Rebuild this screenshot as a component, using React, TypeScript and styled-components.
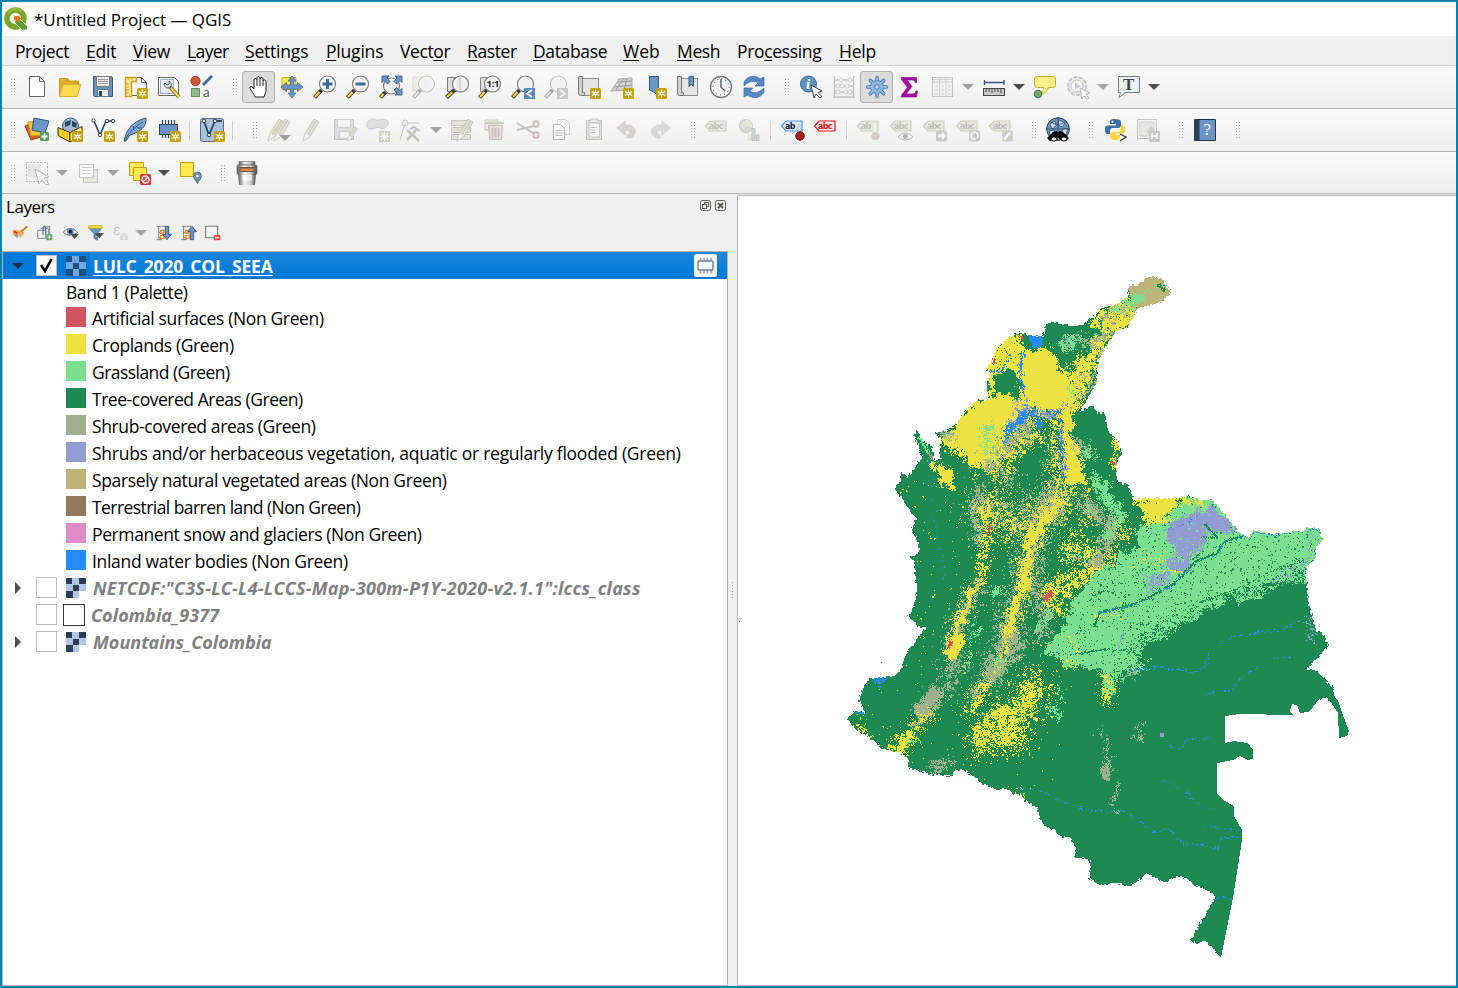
import React from "react";
import styled, { createGlobalStyle } from "styled-components";

const Global = createGlobalStyle`
  * { box-sizing: border-box; }
  html, body { margin: 0; padding: 0; background: #fff; }
  body { font-family: "Open Sans", "Noto Sans", sans-serif; color: #000; }
`;

/* ---------- window ---------- */
const Window = styled.div`
  width: 1458px; height: 988px; display: flex; flex-direction: column;
  border: 2px solid #0082b3; background: #f0f0f0; overflow: hidden;
`;
const TitleBar = styled.header`
  height: 34px; flex: none; background: #fff; display: flex; align-items: center;
  padding-left: 2px; gap: 6px;
`;
const Title = styled.span`
  font-size: 17px; letter-spacing: -0.04px; white-space: pre; line-height: 24px; padding-top: 1px;
`;
const MenuBar = styled.nav`
  height: 30px; flex: none; display: flex; align-items: center; padding-left: 13px;
  border-bottom: 1px solid #cfcfcf;
`;
const MenuItem = styled.span<{ $w: number; $ls?: number }>`
  flex: none; width: ${(p) => p.$w}px; font-size: 17.5px; letter-spacing: ${(p) => p.$ls ?? -0.2}px; line-height: 24px;
  white-space: nowrap;
  u { text-underline-offset: 2px; text-decoration-thickness: 1px; }
`;
const Toolbar = styled.div<{ $h: number }>`
  height: ${(p) => p.$h}px; flex: none; display: flex; align-items: center;
  background: linear-gradient(#fafafa, #efefef); border-bottom: 1px solid #b4b4b4;
`;
const Grip = styled.span<{ $first?: boolean }>`
  flex: none; width: ${(p) => (p.$first ? 18.4 : 24)}px; height: 18px; display: flex;
  padding-left: ${(p) => (p.$first ? 8 : 13.6)}px;
  &::before {
    content: ""; width: 5px; height: 18px;
    background: radial-gradient(circle, #a9a9a9 0.8px, transparent 0.9px) 0 0 / 3px 3px;
  }
`;
const Button = styled.span<{ $on?: boolean }>`
  flex: none; width: 33px; height: 32px; display: flex; align-items: center; justify-content: center;
  border: 1px solid ${(p) => (p.$on ? "#adadad" : "transparent")}; border-radius: 3px;
  background: ${(p) => (p.$on ? "#dcdcdc" : "transparent")};
`;
const Arrow = styled.span<{ $dim?: boolean; $w?: number }>`
  flex: none; width: ${(p) => p.$w ?? 18}px; display: flex; justify-content: center;
  &::before {
    content: ""; border: 6px solid transparent; border-bottom: 0;
    border-top-color: ${(p) => (p.$dim ? "#a3a3a3" : "#4d4d4d")};
  }
`;
const Separator = styled.span`
  flex: none; width: 10px; height: 19px; display: flex; justify-content: center;
  &::before { content: ""; width: 2px; background: linear-gradient(90deg, #d0d0d0 50%, #fff 50%); }
`;

/* ---------- icon fragments ---------- */
const Svg = styled.svg<{ $faded?: boolean }>`
  flex: none; display: block; overflow: visible; opacity: ${(p) => (p.$faded ? 0.4 : 1)};
  filter: ${(p) => (p.$faded ? "grayscale(.4)" : "none")};
`;
const Star = ({ x = 13, y = 13 }: { x?: number; y?: number }) => (
  <g transform={`translate(${x} ${y})`}>
    <rect width="11" height="11" rx="1.5" fill="#c5a20a" />
    <path d="M5.5 1.4v8.2M1.9 3.4l7.2 4.2M1.9 7.6l7.2-4.2" stroke="#fff" strokeWidth="1.2" />
    <circle cx="5.5" cy="5.5" r="1.9" fill="#fff" />
    <circle cx="5.5" cy="5.5" r=".8" fill="#c5a20a" />
  </g>
);
const Lens = ({ x = 14.5, y = 9, dim }: { x?: number; y?: number; dim?: boolean }) => (
  <g>
    <path d={`M1.5 22.5L${x - 6} ${y + 6}`} stroke="#333" strokeWidth="4" />
    <path d={`M2 22L${x - 8} ${y + 8}`} stroke={dim ? "#ccc" : "#fdd33c"} strokeWidth="2.3" />
    <circle cx={x} cy={y} r="8" fill="#eee" fillOpacity=".94" stroke="#777" strokeWidth="1.2" />
    <circle cx={x} cy={y} r="6.6" fill="none" stroke="#fff" strokeWidth=".8" />
  </g>
);
const Pencil = ({ x = 0, y = 0, s = 1 }: { x?: number; y?: number; s?: number }) => (
  <g transform={`translate(${x} ${y}) scale(${s})`}>
    <path d="M2 23l2.500-8.500L13 1l5 3-8.500 14z" fill="#c9bd8c" stroke="#8b7e55" />
    <path d="M2 23l2.500-8.500 5 3.500z" fill="#fff" stroke="#8b7e55" strokeWidth=".7" />
    <path d="M7 16l8.500-13.500" stroke="#8b7e55" />
  </g>
);
const Tag = ({ color = "#9b9563", fill = "#d9d5b4", ink = "#666", text = "abc" }: { color?: string; fill?: string; ink?: string; text?: string }) => (
  <g>
    <path d="M.5 8L5 3h16v10H5z" fill={fill} stroke={color} strokeWidth="1.2" />
    <text x="4" y="11" fontFamily="DejaVu Sans" fontWeight="700" fontSize="8" fill={ink} textLength={text === "abc" ? 14.5 : 10.5}>{text}</text>
  </g>
);
const Sheet = ({ fill = "#e5e5e5" }: { fill?: string }) => (
  <g>
    <path d="M5.500 3.500H21.500V20.500H5.500z" fill={fill} stroke="#8d8d8d" />
    <path d="M1.500 1.500h4v16h2v3H3.500c-2 0-2-2-2-4z" fill="#d0d0d0" stroke="#777" />
  </g>
);
const Blue = "#6a95c7";
const Dark = "#2d4560";

const icons: Record<string, React.ReactNode> = {
  doc: <path d="M4.500 1.500h10l5 5v15h-15zM14.500 1.500v5h5" fill="#fff" stroke="#666" />,
  open: <><path d="M1.500 21V3.500h8l2 2.500h9v4" fill="#dcae2c" stroke="#c49a21" /><path d="M1.500 21.500L5 9.500h18l-4 12z" fill="#fcd94f" stroke="#dbb02f" /></>,
  save: <><path d="M2.500 1.500h18l1 1v19h-18l-1-1z" fill="#6d91bd" stroke="#3c5a7c" /><path d="M5.500 1.500h13v10h-13z" fill="#eee" stroke="#777" /><path d="M7 4.500h10M7 6.500h10M7 8.500h10" stroke="#999" /><path d="M6.500 14.500h11v7h-11z" fill="#eee" stroke="#5b7799" /><path d="M8 16h3v5H8z" fill={Dark} /></>,
  layout: <><path d="M4.500 2.500h13l5 5v13h-18z" fill="#f6f6f6" stroke="#666" /><path d="M17.500 2.500v5h5" fill="none" stroke="#666" /><path d="M1.500 2.500h11v4h-5v15h-6z" fill="#fbe59b" stroke="#c89e16" strokeWidth="1.400" /><path d="M5 3v2M8 3v2M2 9h3M2 12h3M2 15h3M2 18h3" stroke="#c89e16" /><Star /></>,
  manager: <><path d="M1.500 2.500h16l4 4v14h-20z" fill="#fff" stroke="#666" /><path d="M3.500 4.500h13v14h-13z" fill="#e8edf8" stroke="#9aaed0" /><path d="M13 12l9 10" stroke="#8b6c1d" strokeWidth="4" /><path d="M14 13l8 9" stroke="#f0ce55" strokeWidth="2.4" /><path d="M7 9c1 4 4 5 6 3s2-4-1-6l0 3-2 1-2-2z" fill="#ddd" stroke="#555" /></>,
  style: <><circle cx="5.500" cy="6" r="4.600" fill="#cf5a33" stroke="#a23c1b" /><path d="M13 10l9-9" stroke="#456f9f" strokeWidth="3" /><rect x="1.500" y="13.500" width="8" height="8" fill="#8ebb92" stroke="#5d9263" /><text x="13" y="22" fontSize="12" fill="#444">a</text></>,
  hand: <path d="M8 22c-1-4-6-8-5-10 1-1 3 0 4 2V5c0-2 2.500-2 3 0V3c0-2 3-2 3 0v1c0-2 3-2 3 0v2c1-2 3-1 3 1v9l-2 6z M10 5v6M13 4v7M16 6v5" fill="#fff" stroke="#222" />,
  pan: <><path d="M2 2.500h14v12H2z" fill="#ffe750" stroke="#cda91c" /><path d="M12 1l4 5h-2.500v4h4V7.500L23 12l-5.500 4.500V14h-4v4H16l-4 5-4-5h2.500v-4h-4v2.500L1 12l5.500-4.500V10h4V6H8z" fill={Blue} stroke="#41678f" strokeWidth=".8" /></>,
  zin: <><Lens /><path d="M14.500 4v10M9.500 9h10" stroke="#3e6a9e" strokeWidth="3" /></>,
  zout: <><Lens /><path d="M9.500 9h10" stroke="#3e6a9e" strokeWidth="3" /></>,
  zfull: <><Lens x={12.5} y={11} /><path d="M3 1h7L8 3l3 3.500L8.500 9 5 5.500l-2 2zM23 1h-7l2 2-3 3.500L17.500 9 21 5.500l2 2zM23 20h-7l2-2-3-3 2.500-2.500 3.500 3 2-2z" fill={Blue} stroke="#41678f" /></>,
  zsel: <><path d="M1 2h12v14H1z" fill="#e4e1c0" stroke="#aaa" /><Lens dim /></>,
  zlayer: <><path d="M2.500 2.500h12v14h-12z" fill="#ddd" stroke="#777" /><Lens x={15.500} /><path d="M15 3v12" stroke="#bbb" /></>,
  znat: <><path d="M2.500 2.500h12v14h-12z" fill="#ddd" stroke="#888" /><Lens x={14.500} /><text x="8.500" y="12" fontSize="9.500" fontWeight="700" fill="#222" textLength="13">1:1</text></>,
  zlast: <><Lens /><rect x="13" y="13" width="11" height="11" fill="#5888bd" /><path d="M21 15l-5 3.500 5 3.500" fill="none" stroke="#fff" strokeWidth="2" /></>,
  znext: <><Lens dim /><rect x="13" y="13" width="11" height="11" fill="#888" /><path d="M16 15l5 3.500-5 3.500" fill="none" stroke="#fff" strokeWidth="2" /></>,
  newmap: <><Sheet /><Star /></>,
  new3d: <><path d="M1 16L9 4l13-1v12z" fill="#d2d2d2" stroke="#aaa" /><path d="M4 12l18-2M7 7l15-1M6 15L13 4M14 15l3-11" stroke="#999" fill="none" /><Star /></>,
  bookmark: <><path d="M6.500 1.500h9v20L11 17l-4.500-2z" fill={Blue} stroke="#35587f" /><Star /></>,
  bookmarks: <><Sheet /><path d="M13 1.500h4.500v10L15.200 9 13 11.500z" fill={Blue} stroke="#35587f" /></>,
  clock: <><circle cx="12" cy="12" r="10.500" fill="#f4f4f4" stroke="#777" strokeWidth="1.300" /><circle cx="12" cy="12" r="8" fill="none" stroke="#5888bd" strokeDasharray="1 3.190" strokeWidth="1.500" /><path d="M12 4v8l4 4" fill="none" stroke="#555" strokeWidth="1.300" /></>,
  refresh: <g fill="#5688c5" stroke="#3a6ba8" strokeWidth=".7"><path d="M2 11V7C6 0 14 0 18 4l4-2v9h-9l3-3C12 5 7 6 2 11z" /><path d="M22 13v4c-4 7-12 7-16 3l-4 2v-9h9l-3 3c4 3 9 2 14-3z" /></g>,
  info: <><circle cx="9.500" cy="9" r="8" fill="#628fc2" stroke="#426b99" /><text x="7" y="14" fontFamily="Liberation Serif" fontStyle="italic" fontWeight="700" fontSize="15" fill="#fff">i</text><path d="M12 10l11 6-4 1.500 4 4-2 1.500-4-4-2 4z" fill="#fff" stroke="#444" /></>,
  abacus: <><path d="M2.500 1v21M21.500 1v21M1 22h22M2 5h20M2 11h20M2 17h20" stroke="#777" strokeWidth="1.400" /><g fill="#eee" stroke="#999"><circle cx="9" cy="5" r="2" /><circle cx="18" cy="5" r="2" /><circle cx="6" cy="11" r="2" /><circle cx="10" cy="11" r="2" /><circle cx="15" cy="11" r="2" /><circle cx="6" cy="17" r="2" /><circle cx="14" cy="17" r="2" /><circle cx="18" cy="17" r="2" /></g></>,
  gear: <><g stroke="#4779b5" strokeWidth="3.500" strokeLinecap="round"><path d="M12 2.500v19M2.500 12h19M5.300 5.300l13.400 13.400M18.700 5.300L5.300 18.700" /></g><circle cx="12" cy="12" r="6.500" fill="#8fb3de" stroke="#4779b5" /><g stroke="#8fb3de" strokeWidth="1.800" strokeLinecap="round"><path d="M12 2.500v19M2.500 12h19M5.300 5.300l13.400 13.400M18.700 5.300L5.300 18.700" /></g><circle cx="12" cy="12" r="2.200" fill="#dcdcdc" stroke="#4779b5" /></>,
  sigma: <path d="M3.500 2.500h15v5H17c0-2-1-2.500-3-2.500H9l5 6.500L8 19h6c3 0 3.500-1 4-3h1.500l-1 6H3.500v-2l6-7.500-6-8z" fill="#a30aa3" stroke="#820082" strokeWidth=".6" />,
  table: <><rect x="1.500" y="2.500" width="20" height="19" fill="#eee" stroke="#777" /><path d="M2 4.500h19M2 7h19M8.500 3v18M15 3v18" stroke="#999" /><path d="M4 11h3M10 11h3M17 11h3M4 15h3M10 15h3M17 15h3M4 19h3M10 19h3M17 19h3" stroke="#999" /></>,
  measure: <><path d="M2.500 5v5M22 5v5M2.500 7.500h20" stroke="#35587f" strokeWidth="1.400" /><rect x="1.500" y="13.500" width="21" height="7" fill="#c9c9c9" stroke="#444" /><path d="M4 14v3M7 14v3M10 14v4M13 14v3M16 14v3M19 14v4" stroke="#444" /></>,
  tip: <><path d="M4.500 1.500h16q2 0 2 3v6q0 2-3 2h-4c-1 4-5 6-9 8 3-3 4-5 4-8h-6q-3 0-3-2.500v-6q0-2.500 3-2.500z" fill="#fdf08a" stroke="#c8ab1e" /><circle cx="5" cy="19" r="3.800" fill="#6eab70" stroke="#3d7040" /></>,
  action: <><circle cx="11" cy="11" r="9" fill="#ddd" stroke="#777" strokeWidth="2" strokeDasharray="4 1.500" /><circle cx="11" cy="11" r="6" fill="#fff" stroke="#777" /><path d="M9 7.500v7l6-3.500z" fill="#7a9bbf" /><path d="M14 13l10 5-4 1 3 4-2 1-3-3-2 3z" fill="#fff" stroke="#555" /></>,
  textann: <><path d="M1.500 1.500h21v16H8.500L2 22.500l1.500-5h-2z" fill="#e9f1f5" stroke="#777" /><text x="6" y="15" fontFamily="Liberation Serif" fontWeight="700" fontSize="17" fill="#444">T</text></>,
  addlayer: <><path d="M0 8l9-4 7 15-10 3z" fill="#d65a2c" stroke="#aa3e18" /><path d="M3 4l13-1 1 14-11 1z" fill="#f4c62a" stroke="#c69b12" /><path d="M9 0l15 3-4 12-13-3z" fill={Blue} stroke="#35587f" /><rect x="15" y="14" width="9" height="9" rx="1.500" fill="#599b5e" /><path d="M19.500 15.500v6M16.500 18.500h6" stroke="#fff" strokeWidth="1.800" /></>,
  geopkg: <><circle cx="12.500" cy="8" r="8" fill="#9db8d6" stroke="#3d5c7d" /><path d="M7 4l6-2-1 5-5 2zM14 3l5 2-1 5-4-2z" fill={Dark} /><path d="M0 9.500l12 5V24L0 17.500z" fill="#f3ce22" stroke="#3d3208" /><path d="M12 14.500l12-6v9L12 24z" fill="#fff160" stroke="#3d3208" /><Star x={14} y={13} /></>,
  vector: <><path d="M3 3l6 14L15 3h7" fill="none" stroke={Dark} strokeWidth="1.600" /><g fill="#fff" stroke={Dark}><circle cx="2.500" cy="2.500" r="1.700" /><circle cx="9" cy="17" r="1.700" /><circle cx="16" cy="3" r="1.700" /><circle cx="22" cy="3" r="1.700" /></g><Star /></>,
  feather: <><path d="M0 23C2 13 8 3 22 0c1 8-5 14-16 17l-4 6z" fill="#7ea6d4" stroke="#35587f" /><path d="M1 22C5 14 12 8 19 4M10 12l-1-4M13 10l5 0" stroke="#35587f" fill="none" /><Star /></>,
  chip: <><path d="M5.500 2v18M8.500 2v18M11.500 2v18M14.500 2v18M17.500 2v18" stroke={Dark} strokeWidth="1.200" /><rect x="2.500" y="6.500" width="18" height="10" fill={Blue} stroke={Dark} /><Star /></>,
  virtual: <><rect x=".500" y=".500" width="23" height="23" rx="2" fill="#a9c1dd" stroke="#4f6d8f" /><path d="M4 3l5 14L15 3h7" fill="none" stroke={Dark} strokeWidth="1.800" /><circle cx="4" cy="3" r="1.800" fill="#fff" stroke={Dark} /><circle cx="15" cy="3" r="1.800" fill="#fff" stroke={Dark} /><circle cx="9" cy="17" r="1.800" fill="#fff" stroke={Dark} /><Star x={14} y={13} /></>,
  pencils: <><Pencil x={-1} /><Pencil x={5} y={0} /><path d="M12 17h12l-6 6z" fill="#222" /></>,
  pencil: <Pencil x={1} />,
  savepen: <><path d="M1.500 1.500h19v20h-19z" fill="#bbb" stroke="#777" /><path d="M4.500 1.500h13v8h-13zM6.500 13.500h10v7h-10z" fill="#eee" stroke="#999" /><Pencil x={13} y={8} s={0.65} /></>,
  blob: <><path d="M4 2c4-3 5 1 9 0s8-2 9 2-4 8-8 6-6 2-10 1S-1 4 4 2z" fill="#bbb" stroke="#888" /><path d="M13 13h11v11H13z" fill="#a29c6a" /><path d="M18.500 14v9M14 18.500h9M15 15l7 7M22 15l-7 7" stroke="#fff" strokeWidth="1.300" /></>,
  vertex: <><path d="M1 22L6 5h14" fill="none" stroke="#777" /><circle cx="6" cy="5" r="3" fill="#ddd" stroke="#777" /><path d="M8 12l12 11M18 11L8 22" stroke="#8a8355" strokeWidth="2.800" /><path d="M11 11l4-2 6 4" stroke="#777" strokeWidth="2" fill="none" /></>,
  rows: <><path d="M1.500 2.500h19v5h-19zM1.500 9.500h19v5h-19zM1.500 16.500h19v5h-19z" fill="#cfc99a" stroke="#8a8355" /><Pencil x={5} y={0} /></>,
  trash: <><path d="M2 2h13v10H2z" fill="#ddd5b0" stroke="#8a8355" /><path d="M5.500 7.500h14l-1 14h-12z" fill="#dfb7b4" stroke="#a0605c" /><path d="M3 5h18M9.500 10v9M12.500 10v9M15.500 10v9" stroke="#a0605c" strokeWidth="1.500" /></>,
  cut: <><path d="M1 5l16 10M1 12L18 8" stroke="#777" strokeWidth="2" /><circle cx="20" cy="6" r="2.700" fill="none" stroke="#a0605c" strokeWidth="2" /><circle cx="20" cy="17" r="2.700" fill="none" stroke="#a0605c" strokeWidth="2" /></>,
  copy: <><path d="M8.500 1.500h8l4 4v11h-12z" fill="#fff" stroke="#999" /><path d="M4.500 6.500h7l4 4v11h-11z" fill="#fff" stroke="#555" /><path d="M6.500 12.500h7M6.500 15h7M6.500 17.500h7" stroke="#666" /></>,
  paste: <><path d="M4.500 2.500h15v19h-15z" fill="#ccc59b" stroke="#777" /><path d="M7 5h10.500v14H7z" fill="#fff" stroke="#888" /><path d="M8 1h8v3.500H8zM8.500 9.500h6M8.500 12h6M8.500 14.500h6" fill="#ddd" stroke="#777" /></>,
  undo: <path d="M2 10l8-7v4c8 0 11 3 10 8-1 4-4 5-8 5v-3c4 0 5-6-2-5v5z" fill="#b6a19a" stroke="#9e887f" />,
  redo: <path d="M22 10l-8-7v4c-8 0-11 3-10 8 1 4 4 5 8 5v-3c-4 0-5-6 2-5v5z" fill="#a8b5a8" stroke="#8e9c8e" />,
  label: <Tag />,
  diagram: <><circle cx="8" cy="8" r="6.500" fill="#bcc79b" stroke="#777" /><path d="M8 8V1.500A6.500 6.500 0 0114 10z" fill="#d9ce9b" /><path d="M8 8l6 2a6.500 6.500 0 01-10 3z" fill="#c09b9b" /><path d="M9.500 15.500h5v7h-5z" fill="#d9ce9b" /><path d="M14 10.500h3v12h-3z" fill="#8fb3a0" stroke="#777" /><path d="M18 17h3v5.500h-3z" fill="#c09b9b" stroke="#777" /></>,
  labelpin: <><Tag color="#4a95e6" fill="#dcecfb" ink="#223" text="ab" /><path d="M18 6v12" stroke="#999" strokeWidth="2.500" /><path d="M18 6v9" stroke="#fff" strokeWidth="1.200" /><circle cx="19" cy="18" r="4.300" fill="#a12020" stroke="#7b1515" /></>,
  labelred: <Tag color="#f11" fill="#fff0f0" ink="#e11" />,
  labelpin2: <><Tag text="ab" /><path d="M18 6v9" stroke="#fff" strokeWidth="2" /><circle cx="18.500" cy="18" r="4.300" fill="#b88" /></>,
  labeleye: <><Tag /><path d="M8 19q7-8 15 0-8 6-15 0z" fill="#fff" stroke="#555" /><circle cx="15.500" cy="18.500" r="2.500" fill="#555" /></>,
  labelmove: <><Tag /><rect x="13" y="12.500" width="11" height="11" rx="2" fill="#888" /><path d="M15 16.500h4v-3l4 4.500-4 4.500v-3h-4z" fill="#fff" /></>,
  labelrot: <><Tag /><rect x="13" y="12.500" width="11" height="11" rx="2" fill="#888" /><path d="M16 20a3.500 3.500 0 115 0M16 17v4h4" fill="none" stroke="#fff" strokeWidth="1.600" /></>,
  labeledit: <><Tag /><rect x="13" y="12.500" width="11" height="11" rx="2" fill="#9a955f" /><path d="M15 21.500l6-7" stroke="#fff" strokeWidth="2.500" /></>,
  globe: <><circle cx="12" cy="11" r="11.300" fill="#6d95c4" stroke="#26374c" /><path d="M4 6l5-3 1 5-4 3zM13 2l6 3-3 4-4-2zM17 10l5 1-2 6-4-2zM3 13l5-1 1 5-4 1z" fill="#c9dcee" stroke={Dark} strokeWidth=".7" /><path d="M1 11h22M12 0v13M5 4q7 5 14 0" stroke={Dark} fill="none" strokeWidth=".8" /><path d="M7 14l4-1 1 2 1-2 4 1 6 6-3 3-6-1-2-3-2 3-6 1-3-3z" fill="#000" /><ellipse cx="8" cy="21" rx="3" ry="2" fill="#fff" stroke="#000" /><ellipse cx="18" cy="21" rx="3" ry="2" fill="#fff" stroke="#000" /></>,
  python: <><path d="M12 1C7 1 7 3 7 4v2h6v1.500H4.500C1 8 1 16 4.500 16H7v-3c0-2 1-3 3-3h5c2 0 3-1 3-3V4c0-2-2-3-6-3z" fill="#3572a5" /><path d="M12 22c5 0 5-2 5-3v-2h-5v-1.500h8.500C23 15 23 7 19.500 7H18v4c0 2-1 3-3 3h-5c-2 0-3 1-3 3v2c0 2 2 3 5 3z" fill="#ffd43b" /><circle cx="9.500" cy="3.800" r="1" fill="#fff" /><path d="M17 16l6 3-6 4" fill="none" stroke="#333" strokeWidth="1.300" /></>,
  model: <><path d="M1.500 1.500h19v19h-19z" fill="#eee" stroke="#777" /><path d="M4 4h14v14H4z" fill="#cdd8be" stroke="#999" /><path d="M4 7l7 7 4-7 3 5-4 5" fill="#86a184" /><rect x="13" y="13" width="11" height="11" rx="1" fill="#888" /><path d="M16 15v6M21 15v6M15 18h7" stroke="#fff" strokeWidth="1.500" /></>,
  help: <><path d="M1.500 1.500h21v21h-21z" fill="#6b95c6" stroke="#263340" /><path d="M2 2h4.500v20H2z" fill="#2f3f50" /><text x="10.500" y="17" fontFamily="Liberation Serif" fontSize="17" fill="#fff">?</text></>,
  select: <><rect x="1.500" y="1.500" width="21" height="19" fill="none" stroke="#555" strokeDasharray="2 1.500" /><path d="M3 3h13v13H3z" fill="#d6d3b0" /><path d="M10 8l14 8-5 1 5 6-3 1-4-5-3 4z" fill="#fff" stroke="#555" /></>,
  forms: <><path d="M7.500 8.500h14v13h-14z" fill="#d9d5b8" stroke="#888" /><path d="M3.500 3.500h14v13h-14z" fill="#fff" stroke="#777" /><path d="M6 6.500h9M6 9.500h9M6 12.500h9" stroke="#888" /></>,
  deselect: <><path d="M2.500 1.500h14v13h-14z" fill="#ffe94e" stroke="#c29c12" /><path d="M6.500 6.500h13v13h-13z" fill="#ffe94e" stroke="#c29c12" /><rect x="13" y="13" width="11" height="11" rx="1.500" fill="#db3030" /><circle cx="18.500" cy="18.500" r="3.600" fill="#d44" stroke="#fff" strokeWidth="1.300" /><path d="M16 21l5-5" stroke="#fff" strokeWidth="1.300" /></>,
  selloc: <><path d="M2.500 1.500h13v14h-13z" fill="#ffe94e" stroke="#c29c12" /><path d="M19.500 22.500c-2-4-4-5-4-7.500a3.800 3.800 0 017.800 0c0 2.500-2 3.500-3.800 7.500z" fill="#6d94ad" stroke="#4c7189" /><circle cx="19.400" cy="15" r="1.300" fill="#fff" /></>,
  bucket: <><defs><linearGradient id="mt"><stop offset="0" stopColor="#555" /><stop offset=".35" stopColor="#f5f5f5" /><stop offset=".7" stopColor="#ccc" /><stop offset="1" stopColor="#444" /></linearGradient></defs><path d="M4 .500h16v3.500H4z" fill="url(#mt)" stroke="#777" strokeWidth=".7" /><path d="M2.500 4h19l.5 2v7H2V6z" fill="url(#mt)" stroke="#666" strokeWidth=".7" /><path d="M4.500 6h15v5h-15z" fill="#6a5a4c" /><path d="M5.500 7.500h13v2.500h-13z" fill="#e0864e" /><path d="M3 11.500h18l-1 12.500H4z" fill="url(#mt)" /><path d="M7 14h10v5l-4 1-6-1z" fill="#fff" fillOpacity=".6" /></>,
  brush: <><path d="M1 8l8-1 3 5-4 7-7-5z" fill="#f2b63b" /><path d="M3 8l6 3-2 3-4-2z" fill="#e33b2a" /><path d="M3 15l6-1-1 5z" fill="#639be0" /><path d="M9 11l5-4 4 5-4 5z" fill="#d8913e" /><path d="M8 14l4 5 6-5-4-4z" fill="#eeb565" /><path d="M15 9l8-7" stroke="#c5812c" strokeWidth="3" /></>,
  addgroup: <><path d="M1 8h12v12H1zM5 5h12v11" fill="none" stroke="#777" strokeWidth="1.300" /><path d="M9 2.500h10V14" fill="none" stroke="#777" strokeWidth="1.300" /><path d="M9 15V4q2-4 4 0v11" fill="none" stroke="#3e6a9e" strokeWidth="1.600" /><rect x="14" y="14" width="9" height="9" rx="1" fill="#599b5e" /><path d="M18.500 15.500v6M15.500 18.500h6" stroke="#fff" strokeWidth="1.600" /></>,
  eye: <><path d="M0 11Q11-1 22 11 11 20 0 11z" fill="#eee" stroke="#777" strokeWidth="1.500" /><circle cx="11" cy="10" r="5" fill="#5c85b3" /><circle cx="11" cy="10" r="2.400" fill="#111" /><path d="M11 13h13l-6.500 8z" fill="#4d4d4d" /></>,
  filter: <><path d="M1 4h20l-7 9v10l-5-3v-7z" fill={Blue} stroke="#35587f" /><path d="M1 1h20v4H1z" fill="#f8e34b" stroke="#b99c12" /><path d="M10 12h14l-7 8z" fill="#4d4d4d" /></>,
  expr: <><text x="0" y="15" fontFamily="DejaVu Serif" fontSize="21" fill="#777">ε</text><path d="M12 22v-6q5-7 9 0v6h-2v-5q-3-3-5 0v5z" fill="#fff" stroke="#888" strokeWidth="1.500" /></>,
  expand: <><path d="M1 2h14M4 2v20M1 22h8M4 11h4M4 19h4" stroke="#777" fill="none" strokeWidth="1.400" /><path d="M7 8h5v4H7zM7 16h5v4H7z" fill="#fff" stroke="#f28c1c" strokeWidth="2" /><path d="M14 2h5v12h4l-6.500 8-6.500-8h4z" fill={Blue} stroke="#35587f" strokeWidth="1.400" /></>,
  collapse: <><path d="M1 2h14M4 2v20M1 22h8M4 11h4M4 19h4" stroke="#777" fill="none" strokeWidth="1.400" /><path d="M7 8h5v4H7zM7 16h5v4H7z" fill="#fff" stroke="#f28c1c" strokeWidth="2" /><path d="M14 22h5V10h4l-6.500-8-6.500 8h4z" fill={Blue} stroke="#35587f" strokeWidth="1.400" /></>,
  remove: <><path d="M1 2h18v17H1z" fill="#f4f4f4" stroke="#777" strokeWidth="1.600" /><rect x="13" y="15" width="10" height="8" rx="1.500" fill="#e34747" /><path d="M15 19h6" stroke="#fff" strokeWidth="1.800" /></>,
};

const Icon = ({ name, size = 24, faded }: { name: string; size?: number; faded?: boolean }) => (
  <Svg width={size} height={size} viewBox="0 0 24 24" $faded={faded}>{icons[name]}</Svg>
);

/* "|" grip, "/" separator, "v" menu arrow, "w" inactive arrow, "-name" disabled, "*name" pressed */
const Tools = ({ items }: { items: string }) => (
  <>
    {items.split(" ").map((t, i) => {
      if (t === "|") return <Grip key={i} $first={i === 0} />;
      if (t === "/") return <Separator key={i} />;
      if (t === "v" || t === "w") return <Arrow key={i} $dim={t === "w"} />;
      const mark = t[0];
      const name = t.replace(/^[-*]/, "");
      return <Button key={i} $on={mark === "*"}><Icon name={name} faded={mark === "-"} /></Button>;
    })}
  </>
);

/* ---------- layer panel ---------- */
const Body = styled.main`display: flex; flex: 1; min-height: 0;`;
const Dock = styled.section`width: 726px; flex: none; display: flex; flex-direction: column;`;
const DockHead = styled.div`
  height: 25px; display: flex; align-items: center; justify-content: space-between; padding: 0 1px 0 4px;
  font-size: 17px; letter-spacing: -0.45px; flex: none;
`;
const DockButtons = styled.span`display: flex; gap: 4px; padding: 0 1px 3px 0;`;
const DockTools = styled.div`height: 32px; flex: none; display: flex; align-items: center; padding: 0 0 5px 9px;`;
const Slot = styled.span<{ $w: number }>`flex: none; width: ${(p) => p.$w}px; display: flex; justify-content: center;`;
const Tree = styled.div`
  flex: 1; background: #fff; border: 1px solid #b4b4b4; padding: 0; min-height: 0;
`;
const Row = styled.div<{ $sel?: boolean; $h?: number }>`
  height: ${(p) => p.$h ?? 27}px; display: flex; align-items: center; white-space: nowrap;
  background: ${(p) => (p.$sel ? "linear-gradient(90deg, #0078d7 87px, transparent 87px), linear-gradient(#1b87de, #0078d7)" : "none")};
`;
const Caret = styled.span<{ $open?: boolean; $blank?: boolean }>`
  width: 33px; flex: none; padding-left: ${(p) => (p.$open ? 9 : 12)}px; display: flex;
  visibility: ${(p) => (p.$blank ? "hidden" : "visible")};
  &::before {
    content: ""; border: solid transparent;
    ${(p) => (p.$open
      ? "border-width: 6px 6px 0; border-top-color: #0a2f50;"
      : "border-width: 6px 0 6px 6px; border-left-color: #4d4d4d;")}
  }
`;
const Check = styled.span`
  width: 21px; height: 21px; flex: none; border: 1px solid #bdbdbd; background: #fff;
  display: flex; align-items: center; justify-content: center; margin-right: 9px;
`;
const Outline = styled.span`
  width: 22px; height: 22px; flex: none; border: 1px solid #333; background: #fff; margin-left: -3px;
`;
const LayerName = styled.span<{ $sel?: boolean; $ls: number; $x?: number }>`
  margin-left: ${(p) => p.$x ?? 7}px; font-size: ${(p) => (p.$sel ? 17.5 : 18)}px; font-weight: 700;
  letter-spacing: ${(p) => p.$ls}px; line-height: 24px;
  font-style: ${(p) => (p.$sel ? "normal" : "italic")};
  color: ${(p) => (p.$sel ? "#fff" : "#808080")};
  text-decoration: ${(p) => (p.$sel ? "underline" : "none")};
  text-underline-offset: 2px; text-decoration-thickness: 1px; text-decoration-skip-ink: none;
`;
const Swatch = styled.span<{ $c: string }>`
  width: 20px; height: 20px; flex: none; margin: 0 6px 1px 63px; background: ${(p) => p.$c};
`;
const Text = styled.span<{ $ls: number; $x?: number }>`
  font-size: 17.5px; letter-spacing: ${(p) => p.$ls}px; margin-left: ${(p) => p.$x ?? 0}px;
`;
const BandText = styled(Text)`padding-top: 1px;`;
const Memory = styled.span`
  width: 23px; height: 23px; margin-left: auto; margin-right: 10px; background: #f4f4f4; border-radius: 2px;
  display: flex; align-items: center; justify-content: center;
`;

const RasterMark = ({ sel }: { sel?: boolean }) => (
  <svg width="20" height="20" viewBox="0 0 20 20" shapeRendering="crispEdges">
    <rect width="20" height="20" fill={sel ? "#6fa8de" : "#afc8e4"} />
    <path d="M0 0h6v6H0zM13 0h7v6h-7zM7 7h6v6H7zM0 13h7v7H0z" fill={sel ? "#1d4f80" : "#2e3d53"} />
    {sel && <path d="M13 13h7v7h-7z" fill="#1d4f80" />}
    {!sel && <path d="M13 13h7v7h-7z" fill="#fff" />}
  </svg>
);

const C = {
  red: "#d0555f", yellow: "#ede242", grass: "#7bdf90", tree: "#1e8a53", shrub: "#9fb08c",
  wet: "#929cd2", sparse: "#bdb377", barren: "#90795a", snow: "#df8bc8", water: "#248cff",
};
const legend: [string, string, number][] = [
  [C.red, "Artificial surfaces (Non Green)", -0.37],
  [C.yellow, "Croplands (Green)", -0.4],
  [C.grass, "Grassland (Green)", -0.55],
  [C.tree, "Tree-covered Areas (Green)", -0.47],
  [C.shrub, "Shrub-covered areas (Green)", -0.39],
  [C.wet, "Shrubs and/or herbaceous vegetation, aquatic or regularly flooded (Green)", -0.26],
  [C.sparse, "Sparsely natural vegetated areas (Non Green)", -0.36],
  [C.barren, "Terrestrial barren land (Non Green)", -0.56],
  [C.snow, "Permanent snow and glaciers (Non Green)", -0.39],
  [C.water, "Inland water bodies (Non Green)", -0.31],
];

/* ---------- land cover raster ---------- */
type Pt = [number, number];
const pts = (s: string): Pt[] => s.trim().split(/\s+/).map((p) => p.split(",").map(Number) as Pt);

const border = pts(`1147,277 1155,277 1163,280 1166,286 1170,291 1169,295 1163,301 1150,305 1137,309 1132,319 1126,329 1117,331 1107,345 1098,361 1096,384 1088,398 1080,411 1093,406 1097,413 1104,413 1108,431 1119,444 1121,453 1116,466 1117,483 1127,484 1134,499 1150,498 1175,499 1188,496 1205,501 1213,500 1228,519 1241,534 1249,537 1254,531 1275,534 1296,531 1304,531 1308,527 1320,530 1321,537 1324,539 1315,549 1316,559 1306,568 1308,602 1316,631 1322,632 1328,646 1307,669 1317,671 1334,689 1334,697 1338,700 1344,718 1349,731 1347,736 1339,738 1338,713 1328,698 1320,698 1309,712 1300,713 1297,705 1292,704 1290,711 1293,715 1240,714 1225,716 1225,743 1234,741 1248,743 1253,750 1253,759 1248,760 1240,756 1233,760 1217,763 1217,793 1223,800 1234,806 1234,816 1242,830 1242,840 1233,898 1221,958 1212,947 1205,941 1198,943 1190,941 1215,898 1213,894 1206,889 1193,884 1181,876 1174,877 1166,882 1159,880 1147,873 1139,880 1129,886 1120,884 1110,883 1099,885 1089,878 1091,866 1089,860 1074,856 1076,849 1070,838 1060,836 1054,829 1044,826 1039,815 1037,808 1025,801 1020,794 1014,794 1005,788 998,790 981,783 974,777 963,769 955,770 953,776 930,775 922,771 908,768 909,760 900,752 888,751 878,745 870,738 855,729 847,719 855,711 865,713 859,700 863,688 871,678 895,676 901,670 903,662 908,651 916,641 923,632 925,627 918,627 914,622 908,616 914,606 917,590 915,572 914,560 909,558 920,552 917,540 912,530 916,520 909,509 903,500 895,489 901,480 902,471 907,477 913,470 919,461 923,460 918,445 914,436 917,431 923,440 932,448 934,460 941,460 940,448 940,439 935,433 948,430 958,422 967,409 978,400 989,399 987,387 990,372 986,369 992,361 996,350 1003,342 1013,336 1020,332 1033,336 1043,336 1046,324 1056,322 1062,325 1082,325 1092,318 1102,309 1117,304 1127,298 1129,285 1136,285 1143,281`);

type Op = { k: "area" | "line"; c: keyof typeof C; p: Pt[]; d: number; w: number };
const area = (c: keyof typeof C, d: number, w: number, s: string): Op => ({ k: "area", c, p: pts(s), d, w });
const line = (c: keyof typeof C, d: number, w: number, s: string): Op => ({ k: "line", c, p: pts(s), d, w });

const ops: Op[] = [
  area("yellow", 0.01, 4, "850,470 1120,470 1060,660 1060,790 850,790"),
  // caribbean coast
  area("yellow", 0.9, 5, "1084,326 1092,316 1110,304 1126,296 1142,309 1128,332 1105,332"),
  line("sparse", 0.6, 5, "1112,308 1127,312 1138,300"),
  area("sparse", 1, 1, "1125,280 1147,270 1168,274 1176,291 1165,306 1138,312 1131,298"),
  line("grass", 0.85, 6, "1119,309 1131,301 1141,297"),
  line("grass", 0.35, 5, "1136,297 1150,288"),
  line("tree", 1, 2, "1158,285 1164,289"),
  line("shrub", 0.6, 4, "1102,318 1110,320"),
  area("yellow", 0.96, 4, "987,361 1000,337 1020,333 1024,352 1023,380 1010,371 1000,370 994,384 989,399"),
  area("yellow", 1, 5, "1018,358 1026,350 1051,348 1058,367 1066,380 1072,405 1058,412 1036,407 1018,396"),
  area("yellow", 0.95, 10, "1056,378 1075,364 1088,349 1102,332 1114,330 1106,348 1095,366 1091,388 1078,409 1058,408"),
  area("yellow", 1, 8, "954,424 968,404 989,394 1024,394 1032,408 1016,424 1008,442 998,464 980,467 962,458 938,443"),
  area("yellow", 0.65, 12, "970,450 1006,430 1030,418 1044,436 1018,462 1002,476 974,475"),
  area("yellow", 0.5, 8, "1022,400 1066,406 1062,420 1030,425"),
  area("tree", 0.98, 5, "997,377 1010,372 1021,382 1018,394 1006,400 994,393"),
  area("tree", 0.97, 5, "1044,345 1070,350 1080,352 1064,370 1056,360"),
  line("shrub", 0.65, 6, "1066,345 1082,340 1098,342 1108,335"),
  line("grass", 0.65, 5, "1064,346 1078,339"),
  line("wet", 0.2, 4, "1064,341 1068,343"),
  line("shrub", 0.5, 4, "1102,345 1097,370 1088,395"),
  line("grass", 0.4, 4, "1068,390 1074,393"),
  line("shrub", 0.3, 5, "1080,370 1080,405"),
  area("water", 1, 2, "1027,336 1044,335 1041,347 1033,349"),
  line("water", 0.6, 2, "1010,355 1003,370 990,373"),
  line("water", 0.65, 2.5, "1022,355 1020,372 1024,395"),
  line("grass", 0.45, 8, "990,428 986,445 993,457"),
  line("wet", 0.75, 7, "1024,405 1026,420 1014,428"),
  line("water", 0.85, 6, "1026,413 1018,424 1008,431 1006,442"),
  line("wet", 0.6, 6, "1038,414 1050,415 1064,408"),
  line("water", 0.75, 4, "1036,412 1040,427"),
  line("water", 0.7, 3, "1050,413 1062,413 1064,405"),
  line("shrub", 0.65, 9, "1024,430 1014,442 1003,450"),
  line("shrub", 0.4, 8, "984,462 997,472 1010,478"),
  line("shrub", 0.5, 6, "944,432 952,438"),
  line("grass", 0.8, 2, "920,438 929,454"),
  line("shrub", 0.5, 4, "930,455 934,465"),
  area("yellow", 0.97, 5, "932,467 945,466 952,475 954,489 940,486"),
  line("water", 0.1, 3, "929,458 932,485 936,520 941,560 942,580"),
  // magdalena valley
  line("yellow", 0.5, 9, "1060,425 1057,465 1055,500 1045,520"),
  line("shrub", 0.25, 9, "1050,440 1055,475"),
  area("yellow", 1, 4, "1061,404 1073,404 1073,440 1080,457 1084,482 1065,485 1061,462 1064,448"),
  line("wet", 0.5, 4, "1061,425 1061,455 1064,470"),
  line("water", 0.25, 3, "1062,420 1063,470 1058,490 1050,510 1030,545"),
  line("yellow", 0.55, 11, "1070,485 1055,510"),
  line("shrub", 0.6, 8, "1079,444 1087,455"),
  line("grass", 0.75, 5, "1085,451 1090,458"),
  line("yellow", 0.6, 5, "1119,436 1112,465"),
  line("red", 0.8, 2, "1113,462 1116,464"),
  // cordilleras
  line("shrub", 0.36, 24, "988,508 1020,520 1050,500"),
  line("yellow", 0.34, 20, "992,508 1010,525 1045,515"),
  line("shrub", 0.6, 6, "982,488 978,510 979,540"),
  line("shrub", 0.62, 14, "1052,505 1035,535 1026,570 1014,610 1005,650 992,672"),
  line("shrub", 0.5, 9, "992,672 975,695"),
  line("yellow", 0.95, 7.5, "1056,505 1038,525 1027,553 1021,585 1014,612 1009,635"),
  line("yellow", 0.65, 5, "1009,635 1003,655 992,675 975,705"),
  line("shrub", 0.8, 9, "1018,637 1008,656 992,674"),
  line("grass", 0.35, 5, "1005,655 995,665"),
  line("yellow", 0.35, 10, "980,695 968,710"),
  line("yellow", 0.55, 8, "985,510 988,535 984,560 978,585 968,600 958,620"),
  line("shrub", 0.45, 11, "975,590 962,615 952,645 950,668"),
  line("yellow", 0.9, 5, "972,590 963,615 956,635"),
  area("yellow", 1, 4, "950,631 963,634 962,651 954,660 946,656"),
  line("grass", 0.5, 3.6, "978,625 971,638 969,662"),
  line("grass", 0.8, 5, "1000,588 998,592"),
  line("shrub", 0.4, 7, "1040,560 1035,600 1048,630"),
  line("shrub", 0.5, 9, "960,665 945,690 930,700"),
  area("shrub", 1, 6, "936,684 942,690 932,712 914,727 914,710"),
  line("yellow", 0.55, 10, "924,718 912,735 900,748"),
  area("yellow", 0.95, 5, "900,736 908,742 900,753 892,752"),
  line("grass", 0.25, 5, "907,741 915,740"),
  line("yellow", 0.25, 9, "860,725 862,732"),
  line("shrub", 0.5, 6, "933,770 950,762"),
  line("yellow", 0.75, 18, "1034,688 1020,712 1010,730"),
  line("yellow", 0.7, 13, "1000,715 985,730 982,745"),
  line("yellow", 0.3, 13, "1020,742 985,738"),
  line("yellow", 0.3, 6, "1020,790 1025,795"),
  line("grass", 0.8, 6, "1050,708 1057,713"),
  line("grass", 0.25, 5, "1062,692 1062,700"),
  // eastern range
  line("yellow", 0.65, 9, "1068,555 1085,550 1103,562 1085,575 1060,582 1045,600"),
  line("yellow", 0.55, 9, "1050,590 1057,615"),
  line("yellow", 0.4, 14, "1122,530 1105,562 1070,590"),
  line("yellow", 0.35, 9, "1090,488 1085,525 1068,545"),
  line("shrub", 0.6, 7, "1045,620 1038,635"),
  line("shrub", 0.4, 6, "1038,600 1046,620"),
  line("grass", 0.75, 5, "1048,615 1040,630"),
  line("shrub", 0.8, 9, "1088,505 1105,518 1113,535 1103,550 1096,562"),
  line("grass", 0.95, 7, "1098,480 1108,500 1123,515"),
  line("grass", 0.65, 5, "1118,522 1108,537"),
  line("grass", 0.55, 6, "1072,556 1085,560"),
  line("grass", 0.5, 5, "1088,505 1092,510"),
  line("red", 1, 4, "1046,598 1050,594"),
  line("red", 1, 2.5, "988,533 990,527"),
  line("red", 1, 2.5, "949,646 951,642"),
  line("red", 0.7, 1, "1089,497 1092,503"),
  line("red", 0.9, 2, "1020,336 1022,338"),
  line("red", 0.9, 1.6, "993,359 994,363"),
  line("red", 0.5, 2, "1075,558 1081,560"),
  // llanos
  area("yellow", 0.97, 4, "1136,494 1176,494 1175,510 1163,520 1145,522 1141,510"),
  area("grass", 0.97, 4, "1147,522 1163,520 1177,506 1190,494 1216,494 1232,519 1243,530 1250,535 1254,526 1275,529 1306,523 1327,527 1330,539 1319,549 1320,559 1308,568 1310,583 1283,585 1258,597 1240,601 1223,603 1206,612 1198,622 1180,626 1165,637 1143,647 1135,665 1120,672 1095,670 1063,666 1058,654 1042,655 1047,645 1062,633 1069,610 1082,587 1100,573 1118,560 1137,548 1138,530"),
  line("yellow", 0.85, 5, "1180,500 1200,503"),
  line("yellow", 0.55, 3, "1148,523 1170,520"),
  line("yellow", 0.35, 6, "1142,560 1162,562"),
  line("yellow", 0.3, 5, "1100,615 1125,612"),
  line("yellow", 0.25, 7, "1070,635 1075,650"),
  area("tree", 0.15, 12, "1130,625 1200,600 1310,570 1308,590 1200,630 1140,655"),
  area("tree", 0.04, 1, "1045,660 1145,520 1325,530 1310,580 1120,670"),
  area("tree", 0.3, 10, "1125,640 1155,630 1200,618 1195,628 1130,660"),
  line("tree", 0.6, 4, "1225,598 1255,590 1303,576"),
  line("tree", 0.5, 1.2, "1200,602 1235,590 1270,572 1305,560"),
  line("tree", 0.5, 1.2, "1090,600 1105,590 1120,596"),
  area("wet", 0.97, 6, "1170,522 1192,513 1210,508 1238,527 1218,534 1202,532 1205,547 1190,558 1178,556 1170,540"),
  area("wet", 0.9, 5, "1165,560 1192,557 1183,574 1161,569"),
  area("wet", 0.65, 7, "1147,577 1170,573 1173,585 1155,590 1142,594"),
  line("wet", 0.2, 6, "1280,580 1310,560 1312,530"),
  line("yellow", 0.4, 1.5, "1160,570 1182,572"),
  line("tree", 0.9, 1.6, "1241,537 1225,541 1217,553 1195,562 1176,582 1148,598 1132,605 1100,612 1094,626"),
  line("water", 0.5, 0.9, "1241,538 1225,542 1218,554 1195,563 1176,583 1148,599 1132,606 1100,613"),
  line("tree", 0.6, 1.5, "1205,525 1218,538 1203,537"),
  line("tree", 0.6, 1.2, "1070,655 1100,650 1125,650"),
  line("wet", 0.5, 1, "1125,630 1118,648"),
  line("water", 0.25, 1, "1150,533 1185,525 1200,515"),
  line("water", 0.5, 1, "1241,538 1254,533 1275,535 1296,533 1308,528 1320,531 1322,540"),
  line("yellow", 0.65, 8, "1108,680 1108,698"),
  line("grass", 0.65, 7, "1107,676 1108,693"),
  line("grass", 0.5, 7, "1118,677 1140,663"),
  line("yellow", 0.4, 5, "1062,660 1078,668"),
  line("shrub", 0.65, 4, "1128,678 1134,672"),
  // amazon
  line("shrub", 0.4, 4, "1101,730 1106,755 1112,765"),
  area("shrub", 0.9, 4, "1101,762 1107,762 1112,775 1107,782 1101,772"),
  line("shrub", 0.5, 3, "1118,785 1112,805 1117,812"),
  line("shrub", 0.45, 4, "1140,724 1137,738"),
  line("wet", 0.3, 7, "1310,625 1313,640"),
  area("wet", 1, 0, "1160,733 1164,733 1164,737 1160,737"),
  area("water", 0.85, 5, "867,674 890,674 879,685"),
  line("water", 0.6, 1.5, "855,711 866,713"),
  line("water", 0.35, 1.3, "1020,788 1043,791 1058,800 1080,808 1100,811 1128,812 1146,825 1155,833 1168,828 1185,845 1205,845 1217,850 1222,838 1241,837"),
  line("water", 0.38, 1.3, "1132,670 1160,667 1200,672 1212,650 1230,637 1255,634 1280,629 1300,622"),
  line("water", 0.22, 1.2, "1205,695 1230,690 1245,674 1275,660 1290,658"),
  line("water", 0.22, 1.2, "1165,743 1178,751 1188,738 1202,740 1218,736"),
  line("water", 0.25, 1.2, "1162,780 1178,787 1200,805 1215,812"),
  line("water", 0.4, 1.5, "1213,897 1230,899"),
  line("water", 0.15, 3, "1205,827 1240,832"),
];

const inside = (p: Pt[], x: number, y: number) => {
  let r = false;
  for (let i = 0, j = p.length - 1; i < p.length; j = i++) {
    if (p[i][1] > y !== p[j][1] > y && x < ((p[j][0] - p[i][0]) * (y - p[i][1])) / (p[j][1] - p[i][1]) + p[i][0]) r = !r;
  }
  return r;
};
const distance = (p: Pt[], x: number, y: number, closed: boolean) => {
  let best = 1e9;
  for (let i = closed ? 0 : 1; i < p.length; i++) {
    const a = p[(i + p.length - 1) % p.length], b = p[i];
    const dx = b[0] - a[0], dy = b[1] - a[1];
    const t = Math.max(0, Math.min(1, ((x - a[0]) * dx + (y - a[1]) * dy) / (dx * dx + dy * dy || 1)));
    best = Math.min(best, Math.hypot(x - a[0] - t * dx, y - a[1] - t * dy));
  }
  return best;
};
const hash = (x: number, y: number, s: number) => {
  let h = Math.imul(x, 374761393) ^ Math.imul(y, 668265263) ^ Math.imul(s + 7, 1274126177);
  h = Math.imul(h ^ (h >>> 13), 1103515245);
  h = Math.imul(h ^ (h >>> 15), 2246822519);
  return ((h ^ (h >>> 16)) >>> 0) / 4294967296;
};
const smooth = (x: number, y: number, s: number) => {
  const i = Math.floor(x), j = Math.floor(y);
  const u = x - i, v = y - j;
  const a = u * u * (3 - 2 * u), b = v * v * (3 - 2 * v);
  return (hash(i, j, s) * (1 - a) + hash(i + 1, j, s) * a) * (1 - b) + (hash(i, j + 1, s) * (1 - a) + hash(i + 1, j + 1, s) * a) * b;
};

const X0 = 840, Y0 = 270, W = 516, H = 694;
function buildRaster() {
  const grid: (keyof typeof C | null)[] = new Array(W * H).fill(null);
  const warpX = new Float32Array(W * H), warpY = new Float32Array(W * H);
  for (let j = 0; j < H; j++)
    for (let i = 0; i < W; i++) {
      const x = X0 + i, y = Y0 + j, k = j * W + i;
      warpX[k] = (smooth(x / 7, y / 7, 501) - 0.5) * 8 + (smooth(x / 3, y / 3, 502) - 0.5) * 4;
      warpY[k] = (smooth(x / 7, y / 7, 503) - 0.5) * 8 + (smooth(x / 3, y / 3, 504) - 0.5) * 4;
      const straight = x > 1215 && y > 700;
      const n = straight ? 0 : 2.4;
      const jx = (hash(x >> 1, y >> 1, 1) - 0.5) * n, jy = (hash(x >> 1, y >> 1, 2) - 0.5) * n;
      if (inside(border, x + 0.5 + jx, y + 0.5 + jy)) grid[k] = "tree";
    }
  ops.forEach((o, s) => {
    const xs = o.p.map((q) => q[0]), ys = o.p.map((q) => q[1]);
    const m = o.w * 2 + 8;
    const xa = Math.max(X0, Math.floor(Math.min(...xs) - m)), xb = Math.min(X0 + W - 1, Math.max(...xs) + m);
    const ya = Math.max(Y0, Math.floor(Math.min(...ys) - m)), yb = Math.min(Y0 + H - 1, Math.max(...ys) + m);
    const fine = o.w === 0 || (o.k === "line" && o.c !== "water" && o.w < 3.5) || o.c === "red";
    const warp = fine ? 0 : o.c === "water" || o.w < 3 ? 0.4 : 1;
    for (let y = ya; y <= yb; y++)
      for (let x = xa; x <= xb; x++) {
        const k = (y - Y0) * W + x - X0;
        if (!grid[k]) continue;
        const px = x + 0.5 + warpX[k] * warp, py = y + 0.5 + warpY[k] * warp;
        const d = distance(o.p, px, py, o.k === "area");
        let prob: number;
        if (o.k === "area") {
          const sd = inside(o.p, px, py) ? d : -d;
          prob = o.w ? o.d * Math.max(0, Math.min(1, 0.5 + sd / o.w)) : sd > 0 ? o.d : 0;
        } else prob = o.d * Math.exp(-Math.pow(d / o.w, 2) * 1.4);
        if (prob < 0.004) continue;
        if (prob > 0.05 && prob < 0.9 && o.w > 3) {
          prob = Math.max(0, Math.min(1, prob + (smooth(x / 4, y / 4, s + 700) - 0.5) * 2 * Math.min(prob, 1 - prob)));
        }
        const pick = hash(x, y, s * 3 + 11);
        const r = pick < 0.5 ? hash(x >> 1, y >> 1, s * 3 + 12) : hash(x, y, s * 3 + 13);
        if (r < prob) grid[k] = o.c;
      }
  });
  const out: Record<string, string[]> = {};
  for (let j = 0; j < H; j++) {
    let i = 0;
    while (i < W) {
      const c = grid[j * W + i];
      let e = i + 1;
      while (e < W && grid[j * W + e] === c) e++;
      if (c) (out[c] ||= []).push(`M${X0 + i} ${Y0 + j}h${e - i}v1h${i - e}z`);
      i = e;
    }
  }
  return Object.entries(out).map(([c, d]) => ({ c: C[c as keyof typeof C], d: d.join("") }));
}
const raster = buildRaster();

const Splitter = styled.div`
  width: 9px; flex: none; display: flex; align-items: center; justify-content: center;
  &::before { content: ""; width: 1px; height: 16px; background: repeating-linear-gradient(#aaa 0 1px, transparent 1px 3px); }
`;
const MapPane = styled.section`
  flex: 1; margin-top: 1px; background: #fff; border: 1px solid #b4b4b4; border-right: 0; min-width: 0; overflow: hidden;
  svg { display: block; }
`;

const menus: [string, string, string, number, number][] = [
  ["Pro", "j", "ect", 71, -0.45], ["", "E", "dit", 47, -0.2], ["", "V", "iew", 54, -0.3], ["", "L", "ayer", 58, -0.6],
  ["", "S", "ettings", 81, -0.2], ["", "P", "lugins", 74, -0.2], ["Vect", "o", "r", 67, -0.4], ["", "R", "aster", 66, -0.4],
  ["", "D", "atabase", 90, -0.35], ["", "W", "eb", 54, 0], ["", "M", "esh", 60, -0.35], ["Pro", "c", "essing", 102, -0.35],
  ["", "H", "elp", 60, -0.2],
];

export default function App() {
  return (
    <Window>
      <Global />
      <TitleBar>
        <svg width="24" height="24" viewBox="0 0 24 24">
          <circle cx="11.500" cy="11.500" r="8.500" fill="none" stroke="#79a62b" strokeWidth="5.500" />
          <path d="M4 6a9 9 0 0113-2" fill="none" stroke="#97c23c" strokeWidth="2" />
          <path d="M11 13h6l6.500 6.500v3.500h-5.500L11 16z" fill="#5f9a35" stroke="#fff" strokeWidth=".8" />
          <path d="M10 9h5l2 3-4 3-3-2z" fill="#ee7913" />
        </svg>
        <Title>*Untitled Project — QGIS</Title>
      </TitleBar>
      <MenuBar>
        {menus.map(([a, u, b, w, ls]) => (
          <MenuItem key={a + u + b} $w={w} $ls={ls}>{a}{u === "j" ? u : <u>{u}</u>}{b}</MenuItem>
        ))}
      </MenuBar>
      <Toolbar $h={43}>
        <Tools items="| doc open save layout manager style | *hand pan zin zout zfull -zsel zlayer znat zlast -znext newmap new3d bookmark bookmarks clock refresh | info -abacus *gear sigma -table w measure v tip -action w textann v" />
      </Toolbar>
      <Toolbar $h={43}>
        <Tools items="| addlayer geopkg vector feather chip / virtual / | -pencils -pencil -savepen -blob -vertex w -rows -trash -cut -copy -paste -undo -redo | -label -diagram / labelpin labelred / -labelpin2 -labeleye -labelmove -labelrot -labeledit | globe | python -model | help |" />
      </Toolbar>
      <Toolbar $h={42}>
        <Tools items="| -select w -forms w deselect v selloc | bucket" />
      </Toolbar>
      <Body>
        <Dock>
          <DockHead>
            Layers
            <DockButtons>
              <svg width="11" height="11" viewBox="0 0 11 11" fill="none" stroke="#5c5c55"><rect x=".5" y=".5" width="10" height="10" rx="2" /><rect x="4.500" y="2.500" width="4" height="4" /><rect x="2.500" y="4.500" width="4" height="4" fill="#f0f0f0" /></svg>
              <svg width="11" height="11" viewBox="0 0 11 11" fill="none" stroke="#5c5c55"><rect x=".5" y=".5" width="10" height="10" rx="2" /><path d="M3 3l5 5M8 3L3 8" strokeWidth="2" /></svg>
            </DockButtons>
          </DockHead>
          <DockTools>
            <Slot $w={17}><Icon name="brush" size={16} /></Slot>
            <Slot $w={34}><Icon name="addgroup" size={16} /></Slot>
            <Slot $w={17}><Icon name="eye" size={16} /></Slot>
            <Slot $w={34}><Icon name="filter" size={16} /></Slot>
            <Slot $w={16}><Icon name="expr" size={16} faded /></Slot>
            <Arrow $dim $w={24} />
            <Slot $w={22}><Icon name="expand" size={16} /></Slot>
            <Slot $w={28}><Icon name="collapse" size={16} /></Slot>
            <Slot $w={20}><Icon name="remove" size={16} /></Slot>
          </DockTools>
          <Tree>
            <Row $sel>
              <Caret $open />
              <Check><svg width="17" height="17" viewBox="0 0 17 17"><path d="M3 8l4 6 6.500-12" fill="none" stroke="#000" strokeWidth="2.500" /></svg></Check>
              <RasterMark sel />
              <LayerName $sel $ls={-0.13}>LULC_2020_COL_SEEA</LayerName>
              <Memory>
                <svg width="17" height="15" viewBox="0 0 17 15"><path d="M3.500 0v15M7 0v15M10.500 0v15M14 0v15" stroke="#8fa3b5" strokeWidth="1.300" /><rect x="1" y="3" width="15" height="9" rx="1" fill="#f7f9fa" stroke="#6d8295" strokeWidth="1.400" /></svg>
              </Memory>
            </Row>
            <Row $h={25}><BandText $ls={-0.45} $x={63}>Band 1 (Palette)</BandText></Row>
            {legend.map(([c, t, ls]) => (
              <Row key={t}><Swatch $c={c} /><Text $ls={ls}>{t}</Text></Row>
            ))}
            <Row><Caret /><Check /><RasterMark /><LayerName $ls={0.25}>NETCDF:"C3S-LC-L4-LCCS-Map-300m-P1Y-2020-v2.1.1":lccs_class</LayerName></Row>
            <Row><Caret $blank /><Check /><Outline /><LayerName $ls={0.08} $x={6}>Colombia_9377</LayerName></Row>
            <Row><Caret /><Check /><RasterMark /><LayerName $ls={0.01}>Mountains_Colombia</LayerName></Row>
          </Tree>
        </Dock>
        <Splitter />
        <MapPane>
          <svg width="718" height="790" viewBox="738 196 718 790" shapeRendering="crispEdges">
            {raster.map((r) => <path key={r.c} d={r.d} fill={r.c} />)}
            <path d="M881 662h1v1h-1zM739 621h1v1h-1z" fill={C.tree} />
          </svg>
        </MapPane>
      </Body>
    </Window>
  );
}
